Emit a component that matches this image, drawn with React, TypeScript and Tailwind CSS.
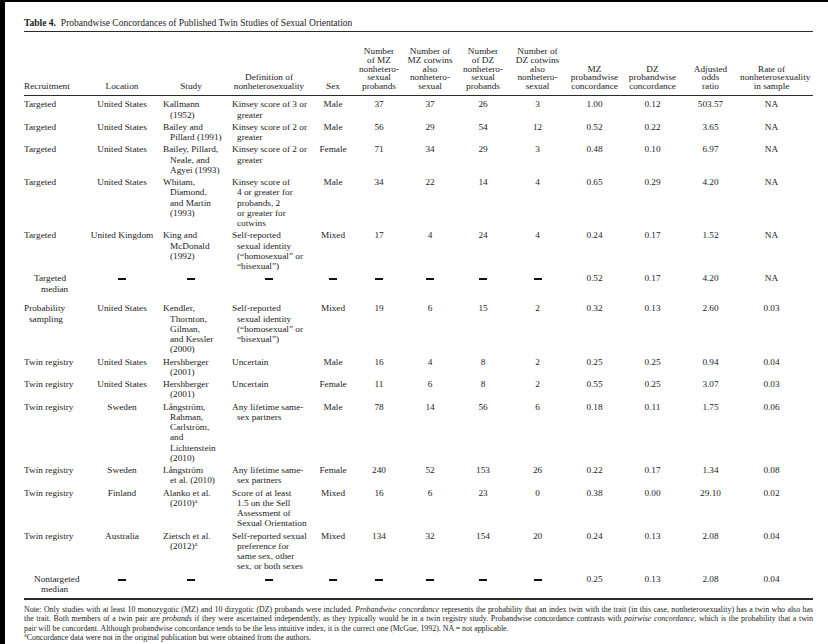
import React from "react";

type Row = {
  rec: string[];
  loc?: string;
  study?: string[];
  def?: string[];
  sex?: string;
  nums: string[];
  noteMark?: boolean;
  median?: boolean;
};

const rows: Row[] = [
  {
    rec: ["Targeted"],
    loc: "United States",
    study: ["Kallmann", "(1952)"],
    def: ["Kinsey score of 3 or", "greater"],
    sex: "Male",
    nums: ["37", "37", "26", "3", "1.00", "0.12", "503.57", "NA"],
  },
  {
    rec: ["Targeted"],
    loc: "United States",
    study: ["Bailey and", "Pillard (1991)"],
    def: ["Kinsey score of 2 or", "greater"],
    sex: "Male",
    nums: ["56", "29", "54", "12", "0.52", "0.22", "3.65", "NA"],
  },
  {
    rec: ["Targeted"],
    loc: "United States",
    study: ["Bailey, Pillard,", "Neale, and", "Agyei (1993)"],
    def: ["Kinsey score of 2 or", "greater"],
    sex: "Female",
    nums: ["71", "34", "29", "3", "0.48", "0.10", "6.97", "NA"],
  },
  {
    rec: ["Targeted"],
    loc: "United States",
    study: ["Whitam,", "Diamond,", "and Martin", "(1993)"],
    def: ["Kinsey score of", "4 or greater for", "probands, 2", "or greater for", "cotwins"],
    sex: "Male",
    nums: ["34", "22", "14", "4", "0.65", "0.29", "4.20", "NA"],
  },
  {
    rec: ["Targeted"],
    loc: "United Kingdom",
    study: ["King and", "McDonald", "(1992)"],
    def: ["Self-reported", "sexual identity", "(\u201chomosexual\u201d or", "\u201cbisexual\u201d)"],
    sex: "Mixed",
    nums: ["17", "4", "24", "4", "0.24", "0.17", "1.52", "NA"],
  },
  {
    rec: ["Targeted", "median"],
    median: true,
    nums: ["0.52", "0.17", "4.20", "NA"],
  },
  {
    rec: ["Probability", "sampling"],
    loc: "United States",
    study: ["Kendler,", "Thornton,", "Gilman,", "and Kessler", "(2000)"],
    def: ["Self-reported", "sexual identity", "(\u201chomosexual\u201d or", "\u201cbisexual\u201d)"],
    sex: "Mixed",
    nums: ["19", "6", "15", "2", "0.32", "0.13", "2.60", "0.03"],
  },
  {
    rec: ["Twin registry"],
    loc: "United States",
    study: ["Hershberger", "(2001)"],
    def: ["Uncertain"],
    sex: "Male",
    nums: ["16", "4", "8", "2", "0.25", "0.25", "0.94", "0.04"],
  },
  {
    rec: ["Twin registry"],
    loc: "United States",
    study: ["Hershberger", "(2001)"],
    def: ["Uncertain"],
    sex: "Female",
    nums: ["11", "6", "8", "2", "0.55", "0.25", "3.07", "0.03"],
  },
  {
    rec: ["Twin registry"],
    loc: "Sweden",
    study: ["Långström,", "Rahman,", "Carlström,", "and", "Lichtenstein", "(2010)"],
    def: ["Any lifetime same-", "sex partners"],
    sex: "Male",
    nums: ["78", "14", "56", "6", "0.18", "0.11", "1.75", "0.06"],
  },
  {
    rec: ["Twin registry"],
    loc: "Sweden",
    study: ["Långström", "et al. (2010)"],
    def: ["Any lifetime same-", "sex partners"],
    sex: "Female",
    nums: ["240", "52", "153", "26", "0.22", "0.17", "1.34", "0.08"],
  },
  {
    rec: ["Twin registry"],
    loc: "Finland",
    study: ["Alanko et al.", "(2010)"],
    noteMark: true,
    def: ["Score of at least", "1.5 on the Sell", "Assessment of", "Sexual Orientation"],
    sex: "Mixed",
    nums: ["16", "6", "23", "0", "0.38", "0.00", "29.10", "0.02"],
  },
  {
    rec: ["Twin registry"],
    loc: "Australia",
    study: ["Zietsch et al.", "(2012)"],
    noteMark: true,
    def: ["Self-reported sexual", "preference for", "same sex, other", "sex, or both sexes"],
    sex: "Mixed",
    nums: ["134", "32", "154", "20", "0.24", "0.13", "2.08", "0.04"],
  },
  {
    rec: ["Nontargeted", "median"],
    median: true,
    nums: ["0.25", "0.13", "2.08", "0.04"],
  },
];

const headers: string[][] = [
  ["Definition of", "nonheterosexuality"],
  ["Sex"],
  ["Number", "of MZ", "nonhetero-", "sexual", "probands"],
  ["Number of", "MZ cotwins", "also", "nonhetero-", "sexual"],
  ["Number", "of DZ", "nonhetero-", "sexual", "probands"],
  ["Number of", "DZ cotwins", "also", "nonhetero-", "sexual"],
  ["MZ", "probandwise", "concordance"],
  ["DZ", "probandwise", "concordance"],
  ["Adjusted", "odds", "ratio"],
  ["Rate of", "nonheterosexuality", "in sample"],
];

const grid =
  "grid grid-cols-[64px_68px_70px_86px_42px_50px_52px_54px_55px_59px_57px_59px_73px]";

function Rule() {
  return <div className="h-[1.5px] w-[789px] bg-[#2b2b2b]" />;
}

// the table's heavy em dash, drawn as a short bar
function Dash() {
  return <span aria-label="—" className="inline-block h-[2px] w-[8px] bg-[#111] align-middle" />;
}

function Mark() {
  return <span className="relative -top-[3px] text-[6px]">a</span>;
}

function Hanging({ lines, indent, mark }: { lines: string[]; indent: string; mark?: boolean }) {
  return (
    <div className="whitespace-nowrap">
      {lines.map((l, i) => (
        <div key={i} className={i === 0 ? "" : indent}>
          {l}
          {mark && i === lines.length - 1 && <Mark />}
        </div>
      ))}
    </div>
  );
}

function DataRow({ r, last }: { r: Row; last: boolean }) {
  const pad = r.median ? (last ? "pt-[1px] pb-[4px]" : "pt-[1px] pb-[8.5px]") : "py-[1px]";
  return (
    <div className={`${grid} ${pad}`}>
      <div className="whitespace-nowrap">
        {r.rec.map((l, i) => (
          <div
            key={i}
            className={r.median ? (i === 0 ? "pl-[10px]" : "pl-[17px]") : i === 0 ? "" : "pl-[5px]"}
          >
            {l}
          </div>
        ))}
      </div>
      {r.median ? (
        <>
          {[0, 1, 2, 3, 4, 5, 6, 7].map((k) => (
            <div key={k} className="text-center">
              <Dash />
            </div>
          ))}
        </>
      ) : (
        <>
          <div className="text-center whitespace-nowrap">{r.loc}</div>
          <div className="pl-[7px]">
            <Hanging lines={r.study!} indent="pl-[7px]" mark={r.noteMark} />
          </div>
          <div className="pl-[6px]">
            <Hanging lines={r.def!} indent="pl-[5px]" />
          </div>
          <div className="text-center">{r.sex}</div>
        </>
      )}
      {r.nums.map((n, i) => (
        <div key={i} className={`text-center ${i === r.nums.length - 1 ? "pr-[10px]" : ""}`}>
          {n}
        </div>
      ))}
    </div>
  );
}

export default function App() {
  return (
    <div className="flex h-[644px] w-[828px] overflow-hidden bg-white font-['Liberation_Serif',serif] text-[#1c1c1c]">
      <div className="w-[5px] shrink-0 bg-black" />
      <div className="flex flex-1 flex-col">
        <div className="flex h-[3px]">
          <div className="w-[185px] bg-black" />
          <div className="h-[1.5px] flex-1 bg-black" />
        </div>
        <div className="w-[808px] pl-[19px]">
          <div className="mt-[16px] text-[9.5px] leading-[11px]">
            <span className="font-bold">Table 4.</span>
            <span className="pl-[5px]">
              Probandwise Concordances of Published Twin Studies of Sexual Orientation
            </span>
          </div>
          <div className="mt-[2px]">
            <Rule />
          </div>

          <div className={`${grid} items-end pt-[15px] pb-[4px] text-[9.25px] leading-[8.75px]`}>
            <div>Recruitment</div>
            <div className="text-center">Location</div>
            <div className="text-center">Study</div>
            {headers.map((h, i) => (
              <div
                key={i}
                className={`whitespace-nowrap text-center ${i === headers.length - 1 ? "pr-[10px]" : ""}`}
              >
                {h.map((l, j) => (
                  <div key={j}>{l}</div>
                ))}
              </div>
            ))}
          </div>
          <Rule />

          <div className="pt-[2px] text-[9.25px] leading-[10.25px]">
            {rows.map((r, i) => (
              <DataRow key={i} r={r} last={i === rows.length - 1} />
            ))}
          </div>
          <Rule />

          <div className="mt-[5px] w-[789px] text-[7.9px] leading-[9.6px]">
            <div className="whitespace-nowrap text-justify [text-align-last:justify]">
              Note: Only studies with at least 10 monozygotic (MZ) and 10 dizygotic (DZ) probands
              were included. <i>Probandwise concordance</i> represents the probability that an
              index twin with the trait (in this case, nonheterosexuality) has a twin who also has
            </div>
            <div className="whitespace-nowrap text-justify [text-align-last:justify]">
              the trait. Both members of a twin pair are <i>probands</i> if they were ascertained
              independently, as they typically would be in a twin registry study. Probandwise
              concordance contrasts with <i>pairwise concordance</i>, which is the probability that
              a twin
            </div>
            <div className="whitespace-nowrap">
              pair will be concordant. Although probandwise concordance tends to be the less
              intuitive index, it is the correct one (McGue, 1992). NA = not applicable.
            </div>
            <div className="whitespace-nowrap">
              <Mark />
              Concordance data were not in the original publication but were obtained from the
              authors.
            </div>
          </div>
        </div>
      </div>
    </div>
  );
}
